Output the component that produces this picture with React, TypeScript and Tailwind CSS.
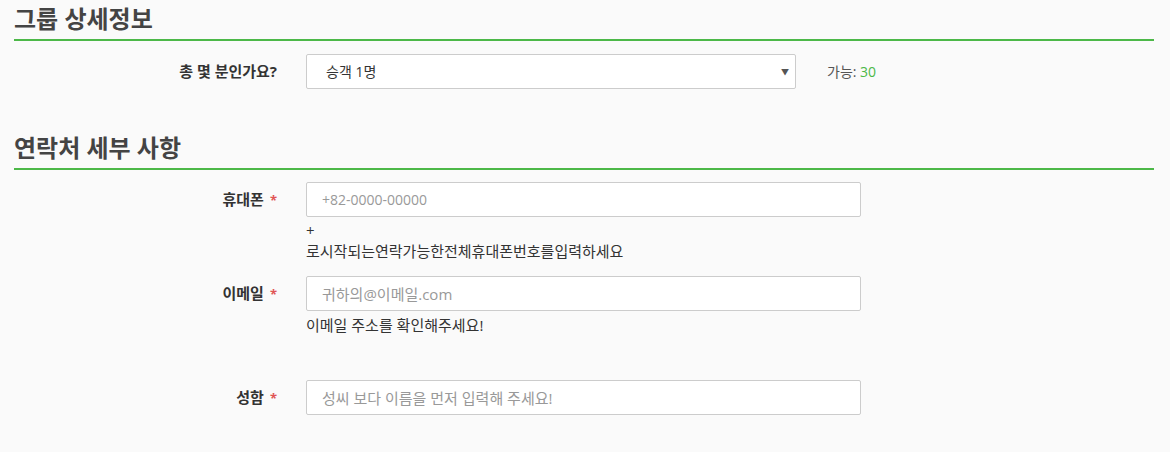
import React from "react";

const font = { fontFamily: '"Open Sans", "Noto Sans CJK KR", sans-serif' };

function SectionTitle({ children }: { children: React.ReactNode }) {
  return (
    <div className="border-b-2 border-[#4cb848] pb-[5px]">
      <h2 className="text-[24px] font-bold leading-[30px] text-[#444]">{children}</h2>
    </div>
  );
}

function Label({ text, required }: { text: string; required?: boolean }) {
  return (
    <div className="w-[263px] shrink-0 text-right text-[15px] font-bold leading-[35px] text-[#333]">
      {text}
      {required && <span className="ml-[6px] text-[13px] text-[#e05555]">*</span>}
    </div>
  );
}

function TextField({ placeholder, size = "text-[15px]" }: { placeholder: string; size?: string }) {
  return (
    <input
      placeholder={placeholder}
      className={`h-[35px] w-[555px] rounded-[2px] border border-[#ccc] bg-white px-[15px] text-[#333] outline-none placeholder:text-[#999] ${size}`}
      style={font}
    />
  );
}

export default function App() {
  return (
    <div className="min-h-[452px] bg-[#fafafa] px-[14px] pt-[4px]" style={font}>
      <div className="w-[1140px]">
        <SectionTitle>그룹 상세정보</SectionTitle>

        <div className="mt-[13px] flex items-center gap-[29px]">
          <Label text="총 몇 분인가요?" />
          <div className="relative flex h-[35px] w-[490px] items-center rounded-[2px] border border-[#ccc] bg-white pl-[19px] text-[14px] text-[#333]">
            승객 1명
            <span className="absolute right-[6px] top-[11px] text-[8px] text-[#555]">▼</span>
          </div>
          <div className="ml-[2px] text-[14px] text-[#555]">
            가능: <span className="text-[#4cb848]">30</span>
          </div>
        </div>

        <div className="mt-[44px]">
          <SectionTitle>연락처 세부 사항</SectionTitle>
        </div>

        <div className="mt-[12px] flex gap-[29px]">
          <Label text="휴대폰" required />
          <div>
            <TextField placeholder="+82-0000-00000" size="text-[14px]" />
            <div className="mt-[3px] text-[15px] leading-[21px] text-[#333]">
              <div>+</div>
              <div>로시작되는연락가능한전체휴대폰번호를입력하세요</div>
            </div>
          </div>
        </div>

        <div className="mt-[14px] flex gap-[29px]">
          <Label text="이메일" required />
          <div>
            <TextField placeholder="귀하의@이메일.com" />
            <div className="mt-[4px] text-[15px] leading-[21px] text-[#333]">이메일 주소를 확인해주세요!</div>
          </div>
        </div>

        <div className="mt-[44px] flex gap-[29px]">
          <Label text="성함" required />
          <TextField placeholder="성씨 보다 이름을 먼저 입력해 주세요!" />
        </div>
      </div>
    </div>
  );
}
